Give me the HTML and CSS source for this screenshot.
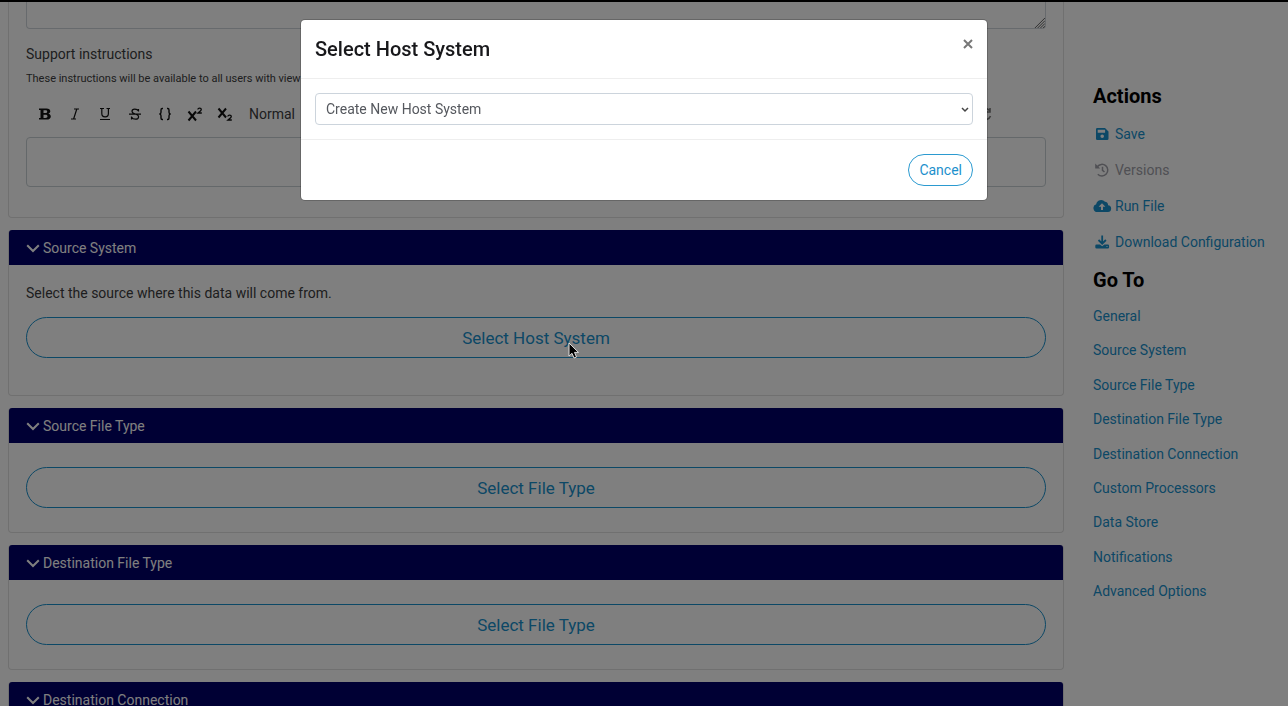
FILE: index.html
```html
<!DOCTYPE html>
<html lang="en">
<head>
<meta charset="utf-8">
<title>Select Host System</title>
<link rel="stylesheet" href="styles.css">
</head>
<body>
<div class="page">
  <main class="content">
    <section class="card card-top">
      <div class="notes-wrap">
        <textarea class="notes" aria-label="Notes"></textarea>
        <svg class="grip" viewBox="0 0 12 12" aria-hidden="true"><path d="M1 12L12 1M4 12l8-8M7 12l5-5M10 12l2-2"/></svg>
      </div>
      <h3 class="field-title">Support instructions</h3>
      <p class="hint">These instructions will be available to all users with view access</p>
      <div class="toolbar">
        <button class="tool" aria-label="Bold"><svg viewBox="0 0 16 16"><path fill="currentColor" fill-rule="evenodd" d="M2 2.500h7.500c2.500 0 3.800 1.100 3.800 2.800 0 1.200-.8 2-2 2.400 1.600.3 2.500 1.300 2.500 2.700 0 2-1.600 3.100-4.200 3.100H2v-1.500h1.500V4H2zM6.500 4.200v2.900h1.700c1.300 0 2-.5 2-1.500s-.7-1.400-2-1.400zM6.500 8.700v3.200h2c1.300 0 2-.6 2-1.600s-.7-1.600-2-1.600z"/></svg></button>
        <button class="tool" aria-label="Italic"><svg viewBox="0 0 16 16"><path d="M7 3h5M4 13h5M9.800 3l-3.200 10" fill="none" stroke="currentColor" stroke-width="1.200"/></svg></button>
        <button class="tool" aria-label="Underline"><svg viewBox="0 0 16 16"><path d="M3 2.500h4M9.500 2.500h3.500M4.800 2.500v5a3.300 3.300 0 0 0 6.600 0v-5M3 13.500h10" fill="none" stroke="currentColor" stroke-width="1.200"/></svg></button>
        <button class="tool" aria-label="Strikethrough"><svg viewBox="0 0 16 16"><path d="M11.500 5.500V3M11.500 5C10 2.300 5 2.500 5 5.200 5 8.500 11.600 7.500 11.600 10.700 11.600 14 6 14 4.500 11M4.500 13.500v-3M2 8.200h12" fill="none" stroke="currentColor" stroke-width="1.200"/></svg></button>
        <button class="tool" aria-label="Code"><svg viewBox="0 0 16 16"><path d="M6 2.500H5.200Q4 2.500 4 4v2.200Q4 8 2.300 8 4 8 4 9.800V12q0 1.500 1.200 1.500H6M10 2.500h.8Q12 2.500 12 4v2.200Q12 8 13.700 8 12 8 12 9.800V12q0 1.500-1.200 1.500H10" fill="none" stroke="currentColor" stroke-width="1.400"/></svg></button>
        <button class="tool" aria-label="Superscript"><svg viewBox="0 0 16 16"><path d="M1.500 5.500l7.500 9M9 5.500l-7.500 9" fill="none" stroke="currentColor" stroke-width="2"/><path d="M10.800 3.500c.3-2 3.500-1.800 3.500 0 0 1.200-1.500 2-3.300 3.500h3.800" fill="none" stroke="currentColor" stroke-width="1.300"/></svg></button>
        <button class="tool" aria-label="Subscript"><svg viewBox="0 0 16 16"><path d="M1.500 2.500l7.500 9M9 2.500l-7.500 9" fill="none" stroke="currentColor" stroke-width="2"/><path d="M10.800 10.500c.3-2 3.500-1.800 3.500 0 0 1.200-1.500 2-3.300 3.500h3.800" fill="none" stroke="currentColor" stroke-width="1.300"/></svg></button>
        <button class="tool tool-text">Normal</button>
        <button class="tool tool-last" aria-label="Redo"><svg viewBox="0 0 16 16"><path d="M12.500 4.500A5.500 5.500 0 1 0 13.500 10M13 2v4H9" fill="none" stroke="currentColor" stroke-width="1.600"/></svg></button>
      </div>
      <div class="editor" contenteditable="true" role="textbox" aria-label="Support instructions"></div>
    </section>

    <section class="card card-source" id="source-system">
      <button class="card-head"><svg class="chev" viewBox="0 0 14 14"><path d="M1.200 4.200L7 10l5.800-5.800"/></svg>Source System</button>
      <div class="card-body">
        <p class="lead">Select the source where this data will come from.</p>
        <button class="pill">Select Host System</button>
      </div>
    </section>
    <section class="card" id="source-file">
      <button class="card-head"><svg class="chev" viewBox="0 0 14 14"><path d="M1.200 4.200L7 10l5.800-5.800"/></svg>Source File Type</button>
      <div class="card-body"><button class="pill">Select File Type</button></div>
    </section>
    <section class="card" id="dest-file">
      <button class="card-head"><svg class="chev" viewBox="0 0 14 14"><path d="M1.200 4.200L7 10l5.800-5.800"/></svg>Destination File Type</button>
      <div class="card-body"><button class="pill">Select File Type</button></div>
    </section>
    <section class="card" id="dest-connection">
      <button class="card-head"><svg class="chev" viewBox="0 0 14 14"><path d="M1.200 4.200L7 10l5.800-5.800"/></svg>Destination Connection</button>
    </section>
  </main>

  <aside class="side">
    <h2 class="side-title">Actions</h2>
    <ul class="actions">
      <li><a href="#save"><svg viewBox="0 0 20 16"><path fill-rule="evenodd" d="M4.300 2H12l3.500 3.500v7.200A1.300 1.300 0 0 1 14.200 14H4.300A1.300 1.300 0 0 1 3 12.700V3.300A1.300 1.300 0 0 1 4.300 2zM4.700 3.800v3h7.400v-3zM9.200 8.500a1.800 1.800 0 1 0 0 3.600 1.800 1.800 0 0 0 0-3.600z"/></svg>Save</a></li>
      <li><a href="#versions" class="muted"><svg viewBox="0 0 20 16"><path d="M4.300 4.700A5.800 5.800 0 1 1 4.800 12.200M9.500 4.800V8.300l2 1.700" fill="none" stroke="currentColor" stroke-width="1.500"/><path d="M2.200 1.500v5h5z"/></svg>Versions</a></li>
      <li><a href="#run"><svg viewBox="0 0 20 16"><path fill-rule="evenodd" d="M4.500 14a4 4 0 0 1-1.300-7.800A5 5 0 0 1 12 3.800a3 3 0 0 1 3 3.400A3.400 3.400 0 0 1 14.500 14zM9 5.300L5.600 8.800H8V12h2V8.800h2.400z"/></svg>Run File</a></li>
      <li><a href="#download"><svg viewBox="0 0 20 16"><path d="M9.200 1.500v7.800M5.500 6l3.700 3.700L12.900 6" fill="none" stroke="currentColor" stroke-width="1.800"/><path fill-rule="evenodd" d="M3.500 10.500H7l2.200 1.700 2.200-1.700h3.500a1.200 1.200 0 0 1 1.200 1.200v1.600a1.200 1.200 0 0 1-1.200 1.200H3.500a1.200 1.200 0 0 1-1.200-1.200v-1.600a1.200 1.200 0 0 1 1.200-1.200zM13.500 12v1h1v-1z"/></svg>Download Configuration</a></li>
    </ul>
    <h2 class="side-title">Go To</h2>
    <ul class="goto">
      <li><a href="#general">General</a></li>
      <li><a href="#source-system">Source System</a></li>
      <li><a href="#source-file">Source File Type</a></li>
      <li><a href="#dest-file">Destination File Type</a></li>
      <li><a href="#dest-connection">Destination Connection</a></li>
      <li><a href="#processors">Custom Processors</a></li>
      <li><a href="#store">Data Store</a></li>
      <li><a href="#notifications">Notifications</a></li>
      <li><a href="#advanced">Advanced Options</a></li>
    </ul>
  </aside>
</div>

<div class="backdrop">
  <div class="modal" role="dialog" aria-modal="true" aria-labelledby="modal-title">
    <div class="modal-head">
      <h1 id="modal-title">Select Host System</h1>
      <button class="close" aria-label="Close"><svg viewBox="0 0 10 10"><path d="M1 1l8 8M9 1L1 9"/></svg></button>
    </div>
    <div class="modal-body">
      <div class="select-wrap">
        <select aria-label="Host system"><option>Create New Host System</option></select>
        <svg class="arrow" viewBox="0 0 8 6" aria-hidden="true"><path d="M1 1l3 3 3-3"/></svg>
      </div>
    </div>
    <div class="modal-foot"><button class="cancel">Cancel</button></div>
  </div>
</div>
<svg class="cursor" viewBox="0 0 12 18" aria-hidden="true"><path d="M1 1v13l3-2.700 2 4.700 2.500-1-2-4.600h4z"/></svg>
</body>
</html>
```

FILE: styles.css
```css
* { box-sizing: border-box; }
body {
  margin: 0;
  background: #fff;
  color: #3c3c40;
  font: 14px/20px Roboto, "Liberation Sans", sans-serif;
}
h1, h2, h3, p, ul { margin: 0; padding: 0; }
ul { list-style: none; }
button { font: inherit; cursor: pointer; }
a { color: #1890cc; text-decoration: none; }

.page {
  display: grid;
  grid-template-columns: minmax(0, 1fr) 195px;
  column-gap: 29px;
  padding-left: 8px;
  border-top: 2px solid #000;
}
.content {
  display: flex;
  flex-direction: column;
  gap: 12px;
  height: calc(100vh - 2px);
  overflow: hidden;
}
.card { flex: none; border: 1px solid #e0e0e0; border-top: 0; border-radius: 4px; }
.card-top { border-radius: 0 0 4px 4px; padding: 0 17px 30px; }
.notes-wrap { position: relative; }
.notes {
  display: block;
  width: 100%;
  height: 27px;
  border: 1px solid #cfd4da;
  border-top: 0;
  border-radius: 0 0 4px 4px;
  background: #fff;
  resize: none;
}
.grip {
  position: absolute;
  right: 1px;
  bottom: 1px;
  width: 11px;
  height: 11px;
  fill: none;
  stroke: #555;
  stroke-width: 1;
}
.field-title { padding-top: 15px; font-size: 14px; font-weight: 400; }
.hint { padding-top: 5px; font-size: 11px; }
.toolbar { display: flex; align-items: center; height: 30px; margin: 10px 0 8px; padding-left: 4px; }
.tool {
  display: flex;
  justify-content: center;
  width: 30px;
  padding: 0;
  border: 0;
  background: none;
  color: #111;
}
.tool svg { width: 16px; height: 16px; }
.tool-text { width: 48px; margin-left: 8px; color: #3c3c40; }
.tool-last { margin-left: auto; margin-right: 46px; color: #777; }
.editor { height: 50px; border: 1px solid #c8d0d4; border-radius: 4px; }

.card-head {
  display: flex;
  align-items: center;
  gap: 3px;
  width: 100%;
  height: 35px;
  padding: 0 17px;
  border: 0;
  border-radius: 3px 3px 0 0;
  background: #000068;
  color: #fff;
}
.chev { width: 14px; height: 14px; fill: none; stroke: #fff; stroke-width: 2; }
.card-body { padding: 24px 17px; }
.card-source .card-body { padding: 18px 17px 37px; }
.lead { margin-bottom: 14px; }
.pill {
  display: block;
  width: 100%;
  height: 41px;
  border: 1px solid #1890cc;
  border-radius: 21px;
  background: none;
  color: #1890cc;
  font-size: 17px;
}

.side { padding-top: 80px; }
.side-title { font-size: 20px; font-weight: 700; line-height: 28px; color: #000; }
.actions { display: grid; gap: 16px; padding: 14px 0; }
.actions a { display: flex; align-items: center; gap: 2px; white-space: nowrap; }
.actions svg { width: 20px; height: 16px; fill: currentColor; }
.actions .muted { color: #a0a0a8; }
.goto {
  display: flex;
  flex-direction: column;
  justify-content: space-between;
  height: 307px;
  padding-top: 12px;
}

.backdrop {
  position: fixed;
  inset: 0;
  display: flex;
  justify-content: center;
  align-items: flex-start;
  padding: 20px;
  background: rgba(0, 0, 0, .5);
}
.modal {
  width: 100%;
  max-width: 686px;
  background: #fff;
  border-radius: 4px;
  box-shadow: 0 0 0 1px rgba(0, 0, 0, .2);
}
.modal-head {
  display: flex;
  align-items: flex-start;
  justify-content: space-between;
  padding: 14px;
  border-bottom: 1px solid #eee;
}
.modal-head h1 { font-size: 20px; font-weight: 500; line-height: 30px; color: #18181b; }
.close { display: flex; padding: 5px 0; border: 0; background: none; }
.close svg { width: 10px; height: 10px; fill: none; stroke: #777; stroke-width: 2; }
.modal-body { padding: 14px; border-bottom: 1px solid #eee; }
.select-wrap { position: relative; }
select {
  appearance: none;
  display: block;
  width: 100%;
  height: 32px;
  padding: 0 10px;
  border: 1px solid #ccd4dc;
  border-radius: 4px;
  background: #fff;
  color: #55585e;
  font: inherit;
}
.arrow {
  position: absolute;
  right: 4px;
  top: 14px;
  width: 8px;
  height: 6px;
  fill: none;
  stroke: #444;
  stroke-width: 1.5;
  pointer-events: none;
}
.modal-foot { display: flex; justify-content: flex-end; padding: 14px; }
.cancel {
  height: 32px;
  padding: 0 10px;
  border: 1px solid #2b9ad0;
  border-radius: 16px;
  background: #fff;
  color: #1c90cc;
}
.cursor {
  position: fixed;
  left: 568px;
  top: 342px;
  width: 12px;
  height: 18px;
  fill: #000;
  stroke: #ddd;
  stroke-width: 1;
}
```
